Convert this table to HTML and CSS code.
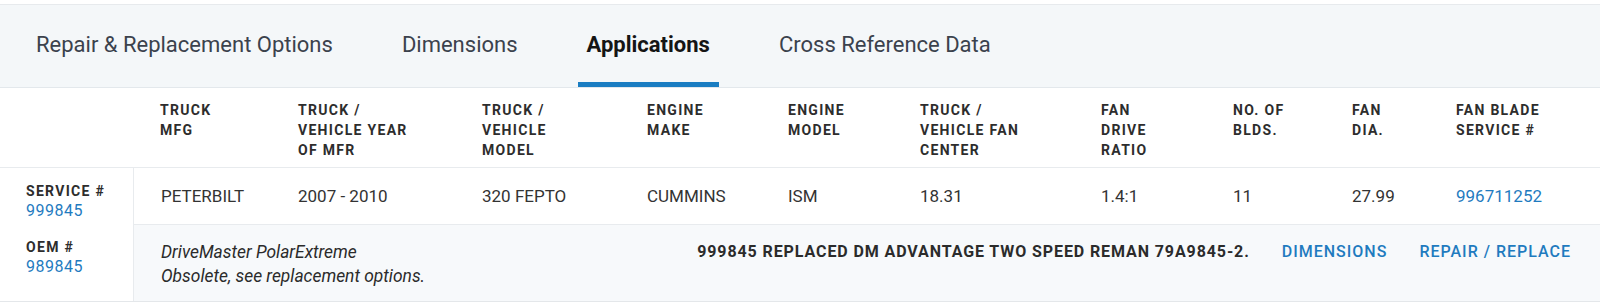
FILE: index.html
```html
<!DOCTYPE html>
<html lang="en">
<head>
<meta charset="utf-8">
<title>Applications</title>
<link rel="stylesheet" href="styles.css">
</head>
<body>
<div class="panel">
  <nav class="tabs">
    <a class="tab">Repair &amp; Replacement Options</a>
    <a class="tab">Dimensions</a>
    <a class="tab tab-active">Applications</a>
    <a class="tab">Cross Reference Data</a>
  </nav>
  <div class="grid">
    <div class="th th-label"></div>
    <div class="th">Truck<br>MFG</div>
    <div class="th">Truck /<br>Vehicle Year<br>of MFR</div>
    <div class="th">Truck /<br>Vehicle<br>Model</div>
    <div class="th">Engine<br>Make</div>
    <div class="th">Engine<br>Model</div>
    <div class="th">Truck /<br>Vehicle Fan<br>Center</div>
    <div class="th">Fan<br>Drive<br>Ratio</div>
    <div class="th">No. of<br>Blds.</div>
    <div class="th">Fan<br>Dia.</div>
    <div class="th">Fan Blade<br>Service #</div>

    <div class="label label-service"><span class="label-title">Service #</span><a class="label-num">999845</a></div>
    <div class="td td-first">PETERBILT</div>
    <div class="td">2007 - 2010</div>
    <div class="td">320 FEPTO</div>
    <div class="td">CUMMINS</div>
    <div class="td">ISM</div>
    <div class="td">18.31</div>
    <div class="td">1.4:1</div>
    <div class="td">11</div>
    <div class="td">27.99</div>
    <div class="td"><a class="link">996711252</a></div>

    <div class="label label-oem"><span class="label-title">OEM #</span><a class="label-num">989845</a></div>
    <div class="oem-row">
      <div class="oem-desc">
        <em>DriveMaster PolarExtreme</em>
        <em>Obsolete, see replacement options.</em>
      </div>
      <div class="oem-actions">
        <span class="oem-note">999845 Replaced DM Advantage Two Speed Reman 79A9845-2.</span>
        <a class="action">Dimensions</a>
        <a class="action">Repair / Replace</a>
      </div>
    </div>
  </div>
</div>
</body>
</html>
```

FILE: styles.css
```css
html, body {
  margin: 0;
  padding: 0;
  background: #ffffff;
}

body {
  padding-top: 4px;
  font-family: Roboto, "Liberation Sans", Arial, sans-serif;
  color: #2b2b2b;
}

.panel {
  border-top: 1px solid #e7eaed;
  border-bottom: 1px solid #e4e7ea;
  box-shadow: 0 3px 4px rgba(0, 0, 0, 0.05);
}

.tabs {
  display: flex;
  gap: 51px;
  height: 82px;
  padding-left: 27px;
  background: #f4f7f9;
  border-bottom: 1px solid #e3e8ec;
}

.tab {
  display: flex;
  align-items: center;
  padding: 2px 9px 0;
  border-bottom: 5px solid transparent;
  font-size: 22px;
  color: #3b424d;
  cursor: pointer;
}

.tab-active {
  font-weight: 700;
  color: #151515;
  border-bottom-color: #1a7dc2;
}

.grid {
  display: grid;
  grid-template-columns: 133px 138px 184px 165px 141px 132px 181px 132px 119px 104px 1fr;
}

.th {
  padding: 12px 16px 7px 27px;
  font-size: 14px;
  font-weight: 700;
  line-height: 20px;
  letter-spacing: 1.3px;
  text-transform: uppercase;
  color: #2d2d2d;
  border-bottom: 1px solid #e8ebee;
}

.th-label {
  padding: 0;
}

.label {
  display: flex;
  flex-direction: column;
  padding-left: 26px;
  line-height: 20px;
}

.label-service {
  padding-top: 13px;
}

.label-oem {
  padding-top: 12px;
}

.label-title {
  font-size: 14px;
  font-weight: 700;
  letter-spacing: 1.3px;
  text-transform: uppercase;
  color: #2d2d2d;
}

.label-num {
  font-size: 16px;
  letter-spacing: 0.5px;
  color: #1f7bbf;
}

.td {
  padding: 18px 10px 18px 27px;
  font-size: 17px;
  line-height: 20px;
  color: #333333;
  border-bottom: 1px solid #e8ebee;
}

.td-first {
  border-left: 1px solid #e8ebee;
}

.link {
  color: #1f7bbf;
}

.oem-row {
  grid-column: 2 / -1;
  display: flex;
  justify-content: space-between;
  align-items: flex-start;
  padding: 15px 29px 13px 27px;
  background: #f7f9fb;
  border-left: 1px solid #e8ebee;
}

.oem-desc {
  display: flex;
  flex-direction: column;
  font-size: 17.4px;
  line-height: 24px;
  color: #2b2b2b;
}

.oem-actions {
  display: flex;
  gap: 32px;
  line-height: 24px;
}

.oem-note {
  font-size: 16px;
  font-weight: 700;
  letter-spacing: 0.9px;
  text-transform: uppercase;
  color: #2b2b2b;
}

.action {
  font-size: 16px;
  font-weight: 500;
  letter-spacing: 1px;
  text-transform: uppercase;
  color: #1f7bbf;
  cursor: pointer;
}
```
